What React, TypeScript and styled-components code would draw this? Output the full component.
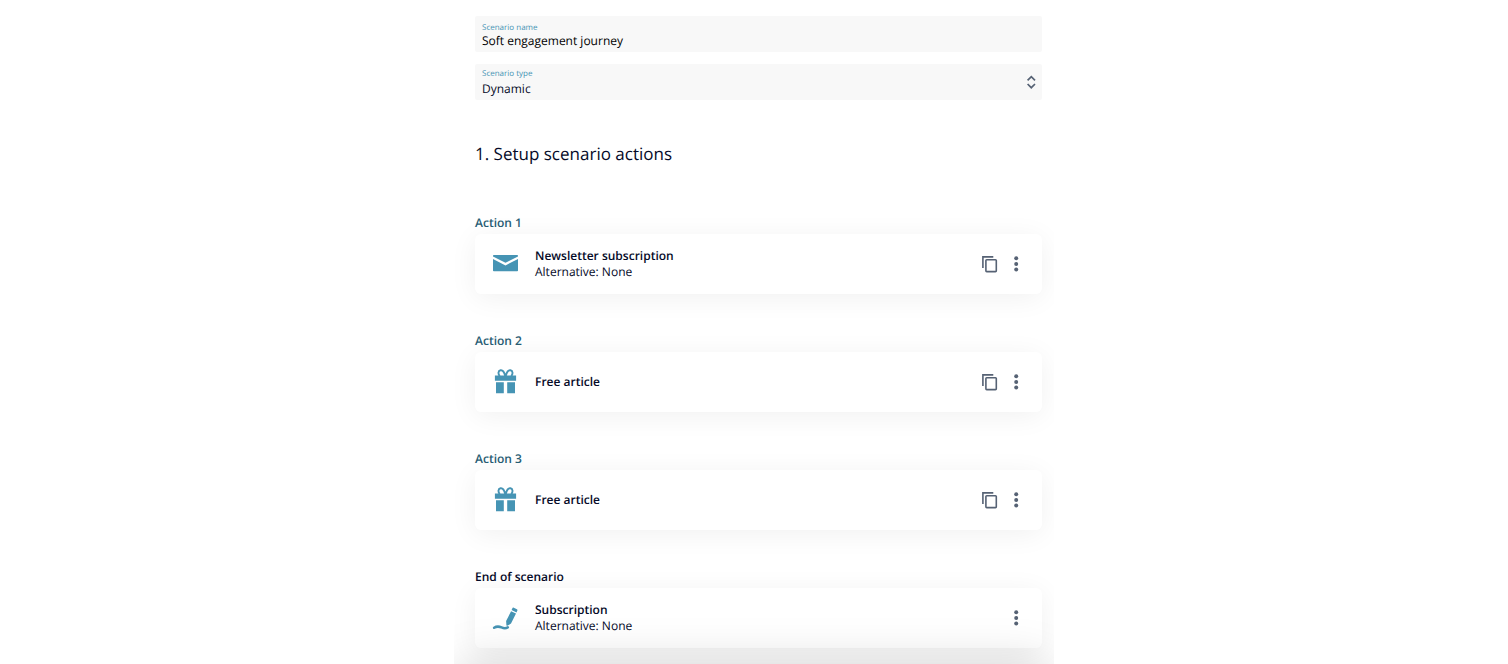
import React from "react";
import styled, { createGlobalStyle } from "styled-components";

const GlobalStyle = createGlobalStyle`
  *, *::before, *::after { box-sizing: border-box; }
  body {
    margin: 0;
    background: #fff;
    color: #050a28;
    font-family: "Open Sans", "Noto Sans", sans-serif;
    font-size: 12px;
    line-height: 16px;
    text-rendering: geometricPrecision;
  }
`;

const Panel = styled.main`
  position: relative;
  width: 100%;
  max-width: 600px;
  height: 100vh;
  margin: 0 auto;
  padding: 16px 12px 0 21px;
  overflow: hidden;
`;

const FooterShade = styled.div`
  position: absolute;
  left: 6px;
  right: 6px;
  top: 100%;
  height: 120px;
  box-shadow: 0 0 48px rgba(0, 0, 0, 0.17);
  pointer-events: none;
`;

const Fields = styled.form`
  display: flex;
  flex-direction: column;
  gap: 12px;
`;

const Field = styled.div<{ $select?: boolean }>`
  position: relative;
  display: flex;
  flex-direction: column;
  gap: ${({ $select }) => ($select ? 2 : 0)}px;
  height: 36px;
  padding: ${({ $select }) => ($select ? 4 : 6)}px 7px 0;
  border-radius: 2px;
  background: #f8f8f8;
`;

const FieldLabel = styled.label`
  color: #4694b4;
  font-size: 8px;
  line-height: 12px;
`;

const TextInput = styled.input`
  width: 100%;
  height: 14px;
  padding: 0;
  border: 0;
  outline: 0;
  background: transparent;
  color: #000;
  font: inherit;
  line-height: 14px;
  text-rendering: inherit;
`;

const Select = styled.select`
  appearance: none;
  width: 100%;
  height: 14px;
  padding: 0;
  border: 0;
  outline: 0;
  background: transparent;
  color: #050a28;
  font: inherit;
  line-height: 14px;
  text-rendering: inherit;
`;

const SelectArrows = styled.svg`
  position: absolute;
  top: 11px;
  right: 6px;
  pointer-events: none;
`;

const Heading = styled.h1`
  margin: 42px 0 0;
  font-size: 17px;
  line-height: 24px;
  font-weight: 400;
`;

const Steps = styled.ol`
  display: flex;
  flex-direction: column;
  gap: 37px;
  margin: 47px 0 0;
  padding: 0;
  list-style: none;
`;

const Step = styled.li`
  display: flex;
  flex-direction: column;
  gap: 1px;
`;

const StepLabel = styled.h2<{ $end?: boolean }>`
  margin: 0;
  color: ${({ $end }) => ($end ? "#050a28" : "#285d74")};
  font-size: 12px;
  line-height: 20px;
  font-weight: 600;
`;

const Card = styled.article`
  display: flex;
  align-items: center;
  height: 60px;
  padding: 0 16px;
  border-radius: 6px;
  background: #fff;
  box-shadow: 0 4px 28px rgba(0, 0, 0, 0.06);
`;

const CardIcon = styled.svg`
  flex: none;
  width: 28px;
  height: 28px;
  margin-right: 16px;
  fill: #4694b4;
`;

const CardText = styled.div`
  flex: 1;
  min-width: 0;
`;

const CardTitle = styled.h3`
  margin: 0;
  font-size: 12px;
  line-height: 16px;
  font-weight: 600;
`;

const CardNote = styled.p`
  margin: 0;
`;

const Tools = styled.div`
  display: flex;
  gap: 6px;
`;

const IconButton = styled.button`
  display: flex;
  width: 20px;
  height: 20px;
  padding: 0;
  border: 0;
  background: none;
  color: #566274;
  cursor: pointer;
`;

const Envelope = () => (
  <CardIcon viewBox="0 0 28 28" aria-hidden="true">
    <path d="M2.8 5h23.4a.8.8 0 0 1 .8.8v.6L14.5 12.7 2 6.4V5.800A.8.8 0 0 1 2.8 5Z" />
    <path d="M2 8.900l12.500 6.500L27 8.900v11.500a.8.8 0 0 1-.8.8H2.800a.8.8 0 0 1-.8-.8Z" />
  </CardIcon>
);

const Gift = () => (
  <CardIcon viewBox="0 0 28 28" aria-hidden="true">
    <path d="M3.900 7.500h21.200v5.300H3.900zM5 14.200h7.800v11H5zM16.200 14.200h7.800v11h-7.800z" />
    <path
      d="M14.200 8C13.200 3.800 11.300 2 9.500 2.300 7 2.700 6.900 6 8.800 8M14.800 8c1-4.200 2.900-6 4.700-5.700 2.500.4 2.600 3.700.7 5.700"
      fill="none"
      stroke="#4694b4"
      strokeWidth="1.9"
    />
  </CardIcon>
);

const Signature = () => (
  <CardIcon viewBox="0 0 28 28" aria-hidden="true">
    <path d="m22.300 3.600 3.600 1.700q.8.4.5 1.200l-.9 1.900-4.900-2.300.8-1.900q.3-.8.900-.6Z" />
    <path d="m20.100 7.200 4.900 2.300-5 10.100-3.700 2.200-.9-.4-.3-4.300Z" />
    <path
      d="M3.100 23.800c2.600-1.700 5-1.400 7.400-.4 2.300 1 4.300 1.100 6.300 0"
      fill="none"
      stroke="#4694b4"
      strokeWidth="2.5"
      strokeLinecap="round"
    />
  </CardIcon>
);

const Copy = () => (
  <svg width="20" height="20" viewBox="0 0 20 20" fill="none" stroke="currentColor" strokeWidth="1.6" aria-hidden="true">
    <path d="M2.900 14V2.900h10.400" />
    <rect x="5.9" y="5.7" width="10.4" height="11.9" rx=".8" />
  </svg>
);

const Dots = () => (
  <svg width="20" height="20" viewBox="0 0 20 20" fill="currentColor" aria-hidden="true">
    <circle cx="10.2" cy="4.2" r="2" />
    <circle cx="10.2" cy="9.9" r="2" />
    <circle cx="10.2" cy="15.5" r="2" />
  </svg>
);

type StepData = {
  label: string;
  title: string;
  note?: string;
  icon: React.ReactNode;
  end?: boolean;
};

const steps: StepData[] = [
  { label: "Action 1", title: "Newsletter subscription", note: "Alternative: None", icon: <Envelope /> },
  { label: "Action 2", title: "Free article", icon: <Gift /> },
  { label: "Action 3", title: "Free article", icon: <Gift /> },
  { label: "End of scenario", title: "Subscription", note: "Alternative: None", icon: <Signature />, end: true },
];

export default function App() {
  return (
    <>
      <GlobalStyle />
      <Panel>
        <Fields>
          <Field>
            <FieldLabel htmlFor="name">Scenario name</FieldLabel>
            <TextInput id="name" defaultValue="Soft engagement journey" />
          </Field>
          <Field $select>
            <FieldLabel htmlFor="type">Scenario type</FieldLabel>
            <Select id="type" defaultValue="Dynamic">
              <option>Dynamic</option>
            </Select>
            <SelectArrows width="10" height="14" viewBox="0 0 10 14" fill="none" stroke="#566274" strokeWidth="1.7" aria-hidden="true">
              <path d="M1.600 5.400 5.300 1.700 9 5.400M1.600 9 5.300 12.700 9 9" />
            </SelectArrows>
          </Field>
        </Fields>
        <Heading>1. Setup scenario actions</Heading>
        <Steps>
          {steps.map((step) => (
            <Step key={step.label}>
              <StepLabel $end={step.end}>{step.label}</StepLabel>
              <Card>
                {step.icon}
                <CardText>
                  <CardTitle>{step.title}</CardTitle>
                  {step.note && <CardNote>{step.note}</CardNote>}
                </CardText>
                <Tools>
                  {!step.end && (
                    <IconButton type="button" aria-label="Duplicate">
                      <Copy />
                    </IconButton>
                  )}
                  <IconButton type="button" aria-label="More options">
                    <Dots />
                  </IconButton>
                </Tools>
              </Card>
            </Step>
          ))}
        </Steps>
        <FooterShade />
      </Panel>
    </>
  );
}
